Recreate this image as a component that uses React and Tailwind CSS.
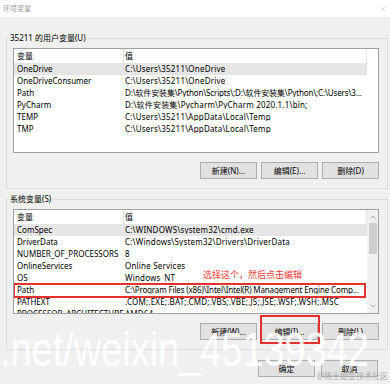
import React from 'react';
import { X, ChevronUp, ChevronDown } from 'lucide-react';

const userVars = [
    { name: 'OneDrive', value: 'C:\\Users\\35211\\OneDrive', selected: true },
    { name: 'OneDriveConsumer', value: 'C:\\Users\\35211\\OneDrive' },
    { name: 'Path', value: 'D:\\软件安装集\\Python\\Scripts\\;D:\\软件安装集\\Python\\;C:\\Users\\3...', tight: true },
    { name: 'PyCharm', value: 'D:\\软件安装集\\Pycharm\\PyCharm 2020.1.1\\bin;' },
    { name: 'TEMP', value: 'C:\\Users\\35211\\AppData\\Local\\Temp' },
    { name: 'TMP', value: 'C:\\Users\\35211\\AppData\\Local\\Temp' },
];

const systemVars = [
    { name: 'ComSpec', value: 'C:\\WINDOWS\\system32\\cmd.exe', selected: true },
    { name: 'DriverData', value: 'C:\\Windows\\System32\\Drivers\\DriverData' },
    { name: 'NUMBER_OF_PROCESSORS', value: '8' },
    { name: 'OnlineServices', value: 'Online Services' },
    { name: 'OS', value: 'Windows_NT' },
    { name: 'Path', value: 'C:\\Program Files (x86)\\Intel\\Intel(R) Management Engine Comp...', marked: true, tight: true },
    { name: 'PATHEXT', value: '.COM;.EXE;.BAT;.CMD;.VBS;.VBE;.JS;.JSE;.WSF;.WSH;.MSC' },
    { name: 'PROCESSOR_ARCHITECTURE', value: 'AMD64' },
];

const Button = ({ children, className = '', mark }) => (
    <div className={`relative w-[57px] h-[17px] border border-[#adadad] bg-[#e1e1e1] flex items-center justify-center ${className}`}>
        {children}
        {/* red annotation box */}
        {mark && <div className="absolute -left-[2px] -right-[3px] -top-[9px] -bottom-[5px] border-2 border-[#e53030]" />}
    </div>
);

const VarList = ({ rows, scrollbar, children }) => (
    <div className="relative ml-[6px] mt-[4px] w-[366px] h-[105px] border border-[#a0a0a0] bg-white overflow-hidden flex">
        <div className="flex-1 flex flex-col">
            <div className="h-[14px] flex items-center shrink-0">
                <div className="w-[110px] h-full border-r border-[#e5e5e5] pl-[3px] flex items-center">变量</div>
                <div className="w-[243px] h-full border-r border-[#e5e5e5] pl-[1px] flex items-center">值</div>
            </div>
            {rows.map(r => (
                <div key={r.name} className={`relative w-[353px] h-[12px] shrink-0 flex items-center whitespace-nowrap ${r.selected ? 'bg-[#e5e5e5]' : ''}`}>
                    <div className="w-[110px] shrink-0 pl-[3px]">{r.name}</div>
                    <div className={`pl-[1px] overflow-hidden ${r.tight ? 'tracking-[-0.15px]' : 'tracking-[0.2px]'}`}>{r.value}</div>
                    {r.marked && <div className="absolute -left-[1px] right-[1px] -top-[1px] -bottom-[2px] border-2 border-[#e53030]" />}
                </div>
            ))}
        </div>
        {scrollbar && (
            <div className="w-[11px] bg-[#f0f0f0] flex flex-col items-center">
                <ChevronUp size={8} strokeWidth={1.5} className="text-[#606060] mt-[3px]" />
                <div className="w-[8px] h-[31px] bg-[#cdcdcd] mt-[2px]" />
                <div className="flex-1" />
                <ChevronDown size={8} strokeWidth={1.5} className="text-[#606060] mb-[3px]" />
            </div>
        )}
        {children}
    </div>
);

export default function App() {
    return (
        <div className="relative w-[390px] h-[384px] overflow-hidden bg-[#f0f0f0] text-[8px] leading-none text-black font-['Noto_Sans','Noto_Sans_CJK_SC',sans-serif]">
            {/* Title bar */}
            <div className="h-[17px] bg-white flex items-center justify-between pl-[3px] pr-[3px]">
                <span className="text-[7px] text-[#999]">环境变量</span>
                <X size={8} strokeWidth={1} className="text-[#999]" />
            </div>

            <div className="ml-[6px] w-[382px] mt-[15px]">
                <fieldset className="border border-[#dcdcdc] pb-[9px]">
                    <legend className="ml-[2px] px-[1px] leading-[12px]">35211 的用户变量(U)</legend>
                    <VarList rows={userVars} />
                    <div className="ml-[6px] w-[366px] mt-[9px] flex justify-end gap-[4px]">
                        <Button>新建(N)...</Button>
                        <Button>编辑(E)...</Button>
                        <Button>删除(D)</Button>
                    </div>
                </fieldset>

                <fieldset className="mt-[4px] border border-[#dcdcdc] pb-[9px]">
                    <legend className="ml-[2px] px-[1px] leading-[12px]">系统变量(S)</legend>
                    <VarList rows={systemVars} scrollbar>
                        <div className="absolute left-[189px] top-[60px] text-[9px] text-[#f03a36] whitespace-nowrap">选择这个，然后点击编辑</div>
                    </VarList>
                    <div className="ml-[6px] w-[366px] mt-[9px] flex justify-end gap-[4px]">
                        <Button>新建(W)...</Button>
                        <Button mark>编辑(I)...</Button>
                        <Button>删除(L)</Button>
                    </div>
                </fieldset>

                <div className="mt-[10px] flex gap-[6px] pl-[252px]">
                    <Button className="w-[56px]">确定</Button>
                    <Button className="w-[56px]">取消</Button>
                </div>
            </div>

            {/* watermarks */}
            <div className="absolute left-0 top-[326px] text-[48px] leading-[48px] text-white/90 whitespace-nowrap origin-left scale-x-[0.79] font-['Liberation_Sans',sans-serif]">
                .net/weixin_45139342
            </div>
            <div className="absolute right-[2px] top-[372px] text-[8px] text-[#a8a8a8] whitespace-nowrap">@稀土掘金技术社区</div>
        </div>
    );
}
